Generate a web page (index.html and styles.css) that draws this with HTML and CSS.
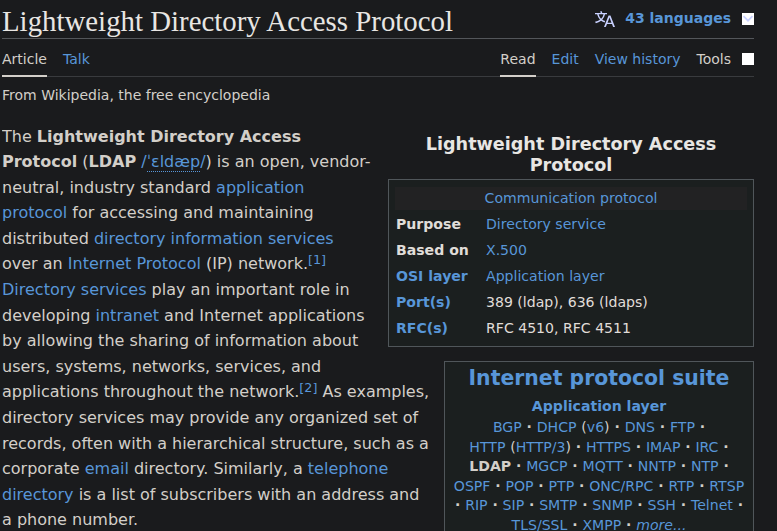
FILE: index.html
```html
<!DOCTYPE html>
<html lang="en">
<head>
<meta charset="utf-8">
<title>Lightweight Directory Access Protocol</title>
<link rel="stylesheet" href="styles.css">
</head>
<body>
<main>
  <header class="heading">
    <h1>Lightweight Directory Access Protocol</h1>
    <div class="languages">
      <svg class="lang-icon" width="20" height="20" viewBox="0 0 20 20"><path fill="#c9d1ff" d="M20 18h-1.44a.6.6 0 0 1-.4-.12.8.8 0 0 1-.23-.31L17 15h-5l-1 2.54a.8.8 0 0 1-.22.3.6.6 0 0 1-.4.14H9l4.55-11.47h1.89zm-3.53-4.31L14.89 9.5a12 12 0 0 1-.39-1.24q-.09.37-.19.69l-.19.56-1.58 4.19zm-6.3-1.58a13.4 13.4 0 0 1-2.91-1.41 11.46 11.46 0 0 0 2.81-5.37H12V4H7.31a4 4 0 0 0-.2-.56C6.87 2.79 6.6 2 6.6 2l-1.47.5s.4.89.6 1.5H0v1.33h2.15A11.23 11.23 0 0 0 5 10.7a17.2 17.2 0 0 1-5 2.1q.56.82.87 1.38a23.3 23.3 0 0 0 5.22-2.51 15.6 15.6 0 0 0 3.56 1.77zM3.63 5.33h4.91a8.1 8.1 0 0 1-2.45 4.45 9.1 9.1 0 0 1-2.46-4.45"/></svg>
      <span class="count">43 languages</span>
      <svg class="toggle" width="12" height="12" viewBox="0 0 12 12"><path d="M1.5 3.2 6 7.7 10.5 3.2" fill="none" stroke="#c9d1ff" stroke-width="1.7"/></svg>
    </div>
  </header>
  <nav class="tabs">
    <div class="group"><span class="tab active">Article</span><a class="tab">Talk</a></div>
    <div class="group"><span class="tab active">Read</span><a class="tab">Edit</a><a class="tab">View history</a><span class="tab tools">Tools<i class="toggle"></i></span></div>
  </nav>
  <div class="tagline">From Wikipedia, the free encyclopedia</div>
  <article>
    <table class="infobox">
      <caption>Lightweight Directory Access Protocol</caption>
      <tr><td colspan="2" class="kind"><a>Communication protocol</a></td></tr>
      <tr><th>Purpose</th><td><a>Directory service</a></td></tr>
      <tr><th>Based on</th><td><a>X.500</a></td></tr>
      <tr><th><a>OSI layer</a></th><td><a>Application layer</a></td></tr>
      <tr><th><a>Port(s)</a></th><td>389 (ldap), 636 (ldaps)</td></tr>
      <tr><th><a>RFC(s)</a></th><td>RFC 4510, RFC 4511</td></tr>
    </table>
    <aside class="suite">
      <h2><a>Internet protocol suite</a></h2>
      <h3><a>Application layer</a></h3>
      <div class="list">
        <a>BGP</a> <b>·</b> <a>DHCP</a> (<a>v6</a>) <b>·</b> <a>DNS</a> <b>·</b> <a>FTP</a> <b>·</b><br>
        <a>HTTP</a> (<a>HTTP/3</a>) <b>·</b> <a>HTTPS</a> <b>·</b> <a>IMAP</a> <b>·</b> <a>IRC</a> <b>·</b><br>
        <b>LDAP</b> <b>·</b> <a>MGCP</a> <b>·</b> <a>MQTT</a> <b>·</b> <a>NNTP</a> <b>·</b> <a>NTP</a> <b>·</b><br>
        <a>OSPF</a> <b>·</b> <a>POP</a> <b>·</b> <a>PTP</a> <b>·</b> <a>ONC/RPC</a> <b>·</b> <a>RTP</a> <b>·</b> <a>RTSP</a><br>
        <b>·</b> <a>RIP</a> <b>·</b> <a>SIP</a> <b>·</b> <a>SMTP</a> <b>·</b> <a>SNMP</a> <b>·</b> <a>SSH</a> <b>·</b> <a>Telnet</a> <b>·</b><br>
        <a>TLS/SSL</a> <b>·</b> <a>XMPP</a> <b>·</b> <a><em>more...</em></a>
      </div>
    </aside>
    <p>The <b>Lightweight Directory Access Protocol</b> (<b>LDAP</b> <a>/<span class="ipa">ˈɛldæp</span>/</a>) is an open, vendor-neutral, industry standard <a>application protocol</a> for accessing and maintaining distributed <a>directory information services</a> over an <a>Internet Protocol</a> (IP) network.<sup><a>[1]</a></sup> <a>Directory services</a> play an important role in developing <a>intranet</a> and Internet applications by allowing the sharing of information about users, systems, networks, services, and applications throughout the network.<sup><a>[2]</a></sup> As examples, directory services may provide any organized set of records, often with a hierarchical structure, such as a corporate <a>email</a> directory. Similarly, a <a>telephone directory</a> is a list of subscribers with an address and a&nbsp;phone number.</p>
  </article>
</main>
</body>
</html>
```
FILE: styles.css
```css
html { background: #1a1b1d; overflow: hidden; }
body { margin: 0; height: 531px; overflow: hidden; color: #d3cfc9; font-family: "DejaVu Sans", sans-serif; }
main { width: 752px; height: 531px; margin-left: 2px; overflow: hidden; }
a { color: #5896d8; }
.heading { display: flex; justify-content: space-between; height: 38px; border-bottom: 1px solid #53565a; }
h1 { margin: 3px 0 0; font: 28.8px/36px "Liberation Serif", serif; letter-spacing: 0.02px; color: #e8e6e3; }
.languages { display: flex; align-items: center; height: 37px; font-size: 14px; font-weight: bold; color: #5896d8; }
.count { padding-bottom: 2px; }
.lang-icon { margin-right: 10px; }
.toggle { display: block; width: 12px; height: 12px; margin-left: 11px; background: #fff; }
.tabs { display: flex; justify-content: space-between; height: 37px; border-bottom: 1px solid #393b3e; }
.group { display: flex; gap: 16px; font-size: 14px; line-height: 16px; }
.tab { box-sizing: border-box; height: 38px; padding-top: 12px; }
.active { border-bottom: 2px solid #d3cfc9; }
.tools { display: flex; }
.tools .toggle { margin-top: 2px; }
.tagline { margin-top: 7px; font-size: 14px; line-height: 22px; }
article { margin-top: 17px; font-size: 16px; line-height: 25.6px; }
p { margin: 0; padding-top: 0.5px; }
sup { font-size: 12.8px; line-height: 1; vertical-align: 5px; }
.ipa { border-bottom: 1px dotted #5896d8; }
.infobox { float: right; box-sizing: border-box; width: 366px; margin: 7px 0 8px 14px; padding: 4px 3px 3px; border: 1px solid #50565a; border-spacing: 3px; background: #1b1f1f; color: #e0ddd9; font-size: 14.08px; line-height: 21px; }
.infobox caption { padding: 4px 30px 3px; color: #e8e6e3; font-size: 17.6px; font-weight: bold; text-align: center; }
.infobox td, .infobox th { height: 21px; padding: 1px; text-align: left; }
.infobox th { width: 85px; }
.infobox .kind { background: #222223; text-align: center; }
.suite { float: right; clear: right; box-sizing: border-box; width: 310px; height: 250px; margin: 6px 0 0 14px; border: 1px solid #50565a; background: #1b1f1f; text-align: center; white-space: nowrap; }
.suite h2 { margin: 4px 0 0; font-size: 20.42px; line-height: 25px; }
.suite h3 { margin: 5px 0 0; font-size: 14.08px; line-height: 20px; }
.list { margin-top: 2px; font-size: 14.08px; line-height: 19.6px; word-spacing: 0.35px; }
```
